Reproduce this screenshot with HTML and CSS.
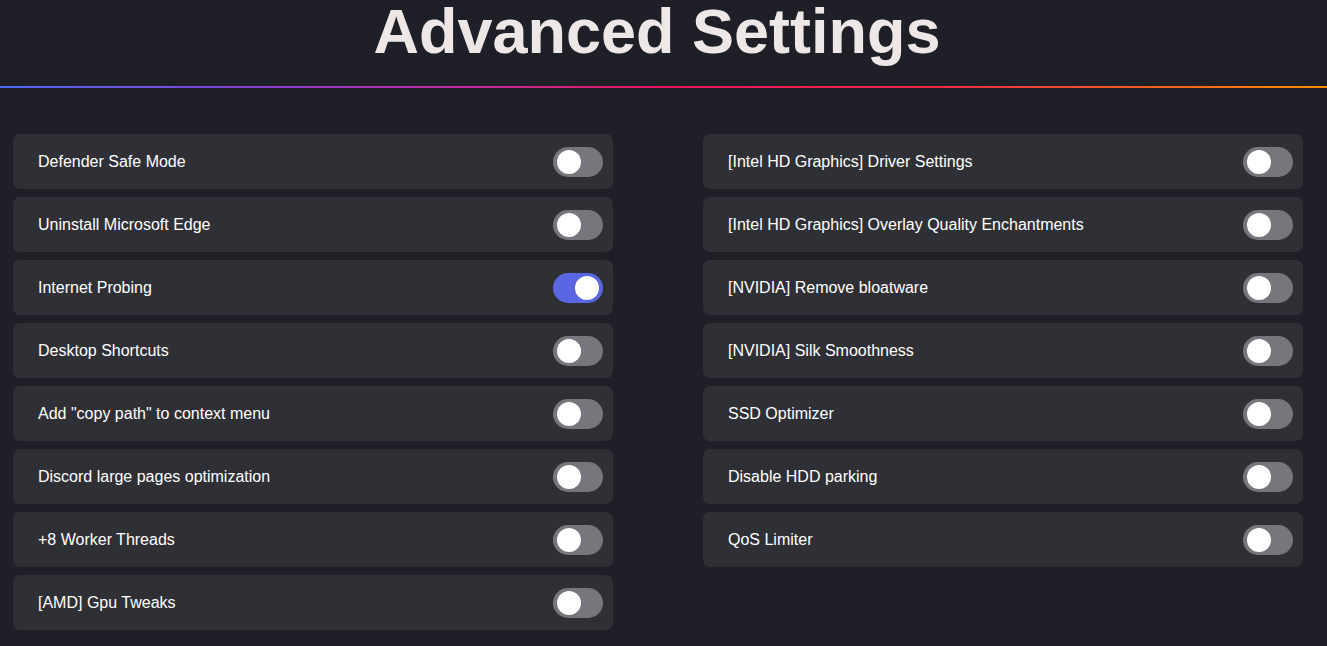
FILE: index.html
```html
<!DOCTYPE html>
<html>
<head>
<meta charset="utf-8">
<link rel="stylesheet" href="styles.css">
</head>
<body>
<header class="header">
  <h1 class="title">Advanced Settings</h1>
  <div class="rule"></div>
</header>
<main class="grid">
  <div class="column">
    <div class="card"><span class="label">Defender Safe Mode</span><span class="toggle"><span class="knob"></span></span></div>
    <div class="card"><span class="label">Uninstall Microsoft Edge</span><span class="toggle"><span class="knob"></span></span></div>
    <div class="card"><span class="label">Internet Probing</span><span class="toggle on"><span class="knob"></span></span></div>
    <div class="card"><span class="label">Desktop Shortcuts</span><span class="toggle"><span class="knob"></span></span></div>
    <div class="card"><span class="label">Add "copy path" to context menu</span><span class="toggle"><span class="knob"></span></span></div>
    <div class="card"><span class="label">Discord large pages optimization</span><span class="toggle"><span class="knob"></span></span></div>
    <div class="card"><span class="label">+8 Worker Threads</span><span class="toggle"><span class="knob"></span></span></div>
    <div class="card"><span class="label">[AMD] Gpu Tweaks</span><span class="toggle"><span class="knob"></span></span></div>
  </div>
  <div class="column">
    <div class="card"><span class="label">[Intel HD Graphics] Driver Settings</span><span class="toggle"><span class="knob"></span></span></div>
    <div class="card"><span class="label">[Intel HD Graphics] Overlay Quality Enchantments</span><span class="toggle"><span class="knob"></span></span></div>
    <div class="card"><span class="label">[NVIDIA] Remove bloatware</span><span class="toggle"><span class="knob"></span></span></div>
    <div class="card"><span class="label">[NVIDIA] Silk Smoothness</span><span class="toggle"><span class="knob"></span></span></div>
    <div class="card"><span class="label">SSD Optimizer</span><span class="toggle"><span class="knob"></span></span></div>
    <div class="card"><span class="label">Disable HDD parking</span><span class="toggle"><span class="knob"></span></span></div>
    <div class="card"><span class="label">QoS Limiter</span><span class="toggle"><span class="knob"></span></span></div>
  </div>
</main>
</body>
</html>
```
FILE: styles.css
```css
html, body {
  margin: 0;
  padding: 0;
  background: #1f1f27;
  font-family: "Liberation Sans", Arial, sans-serif;
  color: #ffffff;
  overflow: hidden;
}
.header {
  display: flex;
  flex-direction: column;
}
.title {
  margin: 0;
  height: 86px;
  font-size: 63px;
  font-weight: 700;
  line-height: 62px;
  text-align: center;
  color: #ede7e7;
  padding-right: 13px;
}
.rule {
  height: 2px;
  background: linear-gradient(90deg, #4d6af2 0%, #8a3fd0 20%, #c42aa0 35%, #e8175f 50%, #ee2a48 70%, #f6621f 88%, #ff8c00 100%);
}
.grid {
  display: grid;
  grid-template-columns: 600px 600px;
  column-gap: 90px;
  padding: 46px 0 0 13px;
}
.column {
  display: flex;
  flex-direction: column;
  gap: 8px;
}
.card {
  height: 55px;
  box-sizing: border-box;
  background: #2f3036;
  border-radius: 7px;
  display: flex;
  align-items: center;
  justify-content: space-between;
  padding: 0 10px 0 25px;
}
.label {
  font-size: 16px;
}
.toggle {
  width: 50px;
  height: 30px;
  border-radius: 15px;
  background: #77767c;
  display: flex;
  align-items: center;
  padding: 0 4px;
  box-sizing: border-box;
}
.toggle.on {
  background: #5b67e2;
  justify-content: flex-end;
}
.knob {
  width: 24px;
  height: 24px;
  border-radius: 50%;
  background: #ffffff;
}
```
